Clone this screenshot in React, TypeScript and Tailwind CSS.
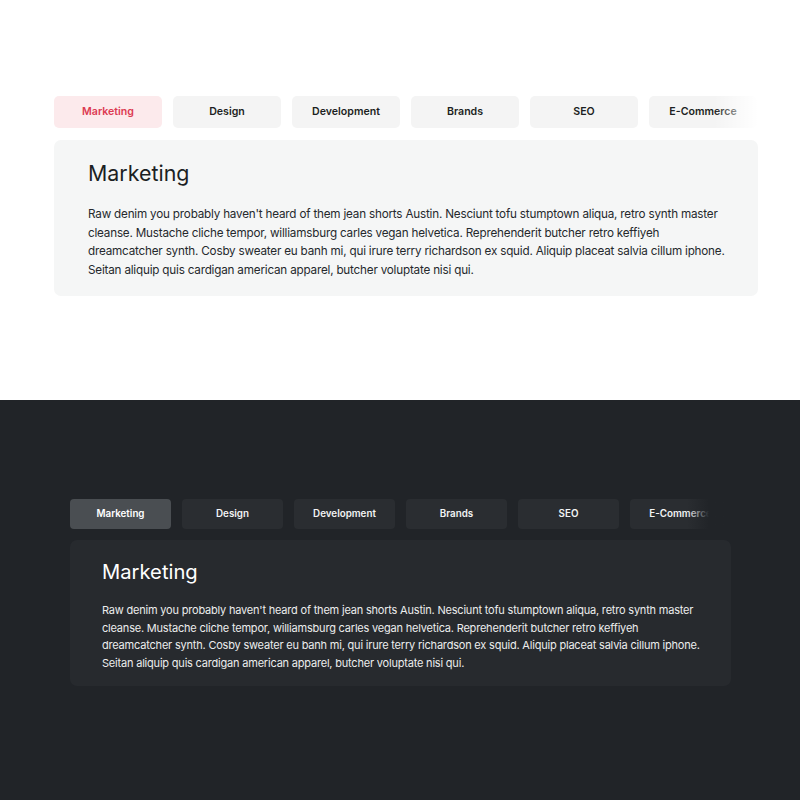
import React from "react";

const tabs = ["Marketing", "Design", "Development", "Brands", "SEO", "E-Commerce"];
const text =
  "Raw denim you probably haven't heard of them jean shorts Austin. Nesciunt tofu stumptown aliqua, retro synth master cleanse. Mustache cliche tempor, williamsburg carles vegan helvetica. Reprehenderit butcher retro keffiyeh dreamcatcher synth. Cosby sweater eu banh mi, qui irure terry richardson ex squid. Aliquip placeat salvia cillum iphone. Seitan aliquip quis cardigan american apparel, butcher voluptate nisi qui.";

function Light() {
  return (
    <div className="h-[400px] bg-white pt-[96px] pl-[54px]">
      <div className="w-[704px]">
        <div className="relative flex gap-[11px] overflow-hidden">
          {tabs.map((t, i) => (
            <div
              key={t}
              className={
                i === 0
                  ? "flex h-[32px] w-[108px] shrink-0 items-center justify-center rounded-[5px] bg-[#fceaec] text-[10.6px] font-semibold text-[#dc3a52]"
                  : "flex h-[32px] w-[108px] shrink-0 items-center justify-center rounded-[5px] bg-[#f4f4f4] text-[10.6px] font-semibold text-[#1c1f22]"
              }
            >
              {t}
            </div>
          ))}
          <div className="pointer-events-none absolute right-0 top-0 h-full w-[44px] bg-gradient-to-r from-white/0 to-white" />
        </div>
        <div className="mt-[12px] h-[156px] rounded-[7px] bg-[#f5f6f6] pl-[34px] pr-[28px] pt-[18px]">
          <h2 className="text-[21.4px] font-normal leading-[30px] text-[#1c1f23]">Marketing</h2>
          <p className="mt-[17px] text-[11.7px] leading-[18.7px] tracking-[-0.2px] text-[#25292d]">{text}</p>
        </div>
      </div>
    </div>
  );
}

function Dark() {
  return (
    <div className="h-[400px] bg-[#212428] pt-[99px] pl-[70px]">
      <div className="w-[661px]">
        <div className="relative flex gap-[11px] overflow-hidden">
          {tabs.map((t, i) => (
            <div
              key={t}
              className={
                i === 0
                  ? "flex h-[30px] w-[101px] shrink-0 items-center justify-center rounded-[4px] bg-[#4a4e52] text-[9.8px] font-semibold text-white"
                  : "flex h-[30px] w-[101px] shrink-0 items-center justify-center rounded-[4px] bg-[#2a2d31] text-[9.8px] font-semibold text-[#f2f3f4]"
              }
            >
              {t}
            </div>
          ))}
          <div className="pointer-events-none absolute right-0 top-0 h-full w-[44px] bg-gradient-to-r from-[#212428]/0 via-[#212428] via-50% to-[#212428]" />
        </div>
        <div className="mt-[11px] h-[146px] rounded-[7px] bg-[#272a2e] pl-[32px] pr-[27px] pt-[18px]">
          <h2 className="text-[20.2px] font-normal leading-[28px] text-white">Marketing</h2>
          <p className="mt-[16px] text-[11px] leading-[17.6px] tracking-[-0.2px] text-[#eceded]">{text}</p>
        </div>
      </div>
    </div>
  );
}

export default function App() {
  return (
    <div className="w-[800px] font-['Inter',sans-serif]">
      <Light />
      <Dark />
    </div>
  );
}
